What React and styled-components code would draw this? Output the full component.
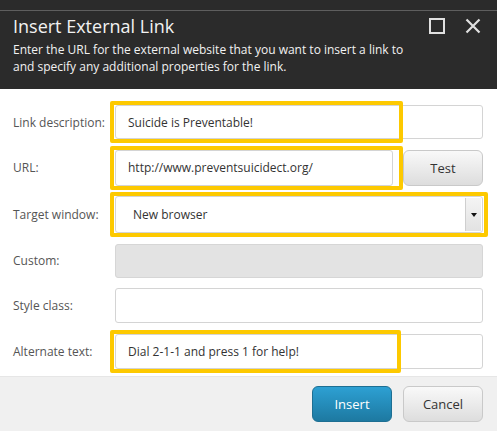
import React from 'react';
import styled, {createGlobalStyle} from 'styled-components';

const Global = createGlobalStyle`
    html, body {
        margin: 0;
        padding: 0;
        background: #ffffff;
    }
    body {
        font-family: "Open Sans", "Liberation Sans", sans-serif;
    }
`;

const Dialog = styled.div`
    width: 497px;
    height: 431px;
    display: flex;
    flex-direction: column;
    overflow: hidden;
    background: #ffffff;
`;

const TopStrip = styled.div`
    height: 10px;
    background: #2b2b2b;
    border-bottom: 1px solid #5e5e5e;
`;

const Header = styled.div`
    background: #2b2b2b;
    color: #f2f2f2;
    padding: 4px 16px 14px 13px;
    height: 78px;
    box-sizing: border-box;
`;

const TitleRow = styled.div`
    display: flex;
    align-items: center;
    justify-content: space-between;
`;

const Title = styled.div`
    font-size: 18px;
    line-height: 22px;
`;

const Icons = styled.div`
    display: flex;
    align-items: center;
    gap: 20px;
    margin-top: -1px;
`;

const Description = styled.div`
    margin-top: 4px;
    font-size: 12px;
    line-height: 17px;
    width: 400px;
`;

const Body = styled.div`
    display: grid;
    grid-template-columns: 102px 1fr;
    row-gap: 10.6px;
    padding: 16px 14px 7px 13px;
`;

const Label = styled.div`
    font-size: 12px;
    color: #555555;
    display: flex;
    align-items: center;
    height: ${p => p.$h || 35}px;
`;

const Field = styled.div`
    position: relative;
    display: flex;
    gap: 10px;
    height: ${p => p.$h || 35}px;
`;

const Input = styled.div`
    flex: 1;
    box-sizing: border-box;
    height: 100%;
    border: 1px solid ${p => (p.$disabled ? '#d6d6d6' : '#d4d4d4')};
    border-radius: 3px;
    background: ${p => (p.$disabled ? '#e3e3e3' : '#ffffff')};
    font-size: 12px;
    color: #333333;
    display: flex;
    align-items: center;
    padding-left: 12px;
`;

const Select = styled(Input)`
    padding-left: 17px;
    justify-content: space-between;
    padding-right: 0;
`;

const Arrow = styled.div`
    width: 15px;
    align-self: stretch;
    margin: 1px 1px 1px 0;
    background: linear-gradient(#f4f4f4, #e2e2e2);
    border-left: 1px solid #cfcfcf;
    display: flex;
    align-items: center;
    justify-content: center;
    &::after {
        content: '';
        border-left: 3px solid transparent;
        border-right: 3px solid transparent;
        border-top: 4px solid #111;
    }
`;

const Button = styled.button`
    width: 80px;
    height: 36px;
    box-sizing: border-box;
    border-radius: 6px;
    font-family: inherit;
    font-size: 13px;
    padding: 0;
    border: 1px solid ${p => (p.$primary ? '#1d6f93' : '#c9c9c9')};
    color: ${p => (p.$primary ? '#ffffff' : '#333333')};
    background: ${p => (p.$primary
        ? 'linear-gradient(#2da0d3, #1d79a1)'
        : 'linear-gradient(#f9f9f9, #dddddd)')};
`;

const Highlight = styled.div`
    position: absolute;
    left: -5px;
    top: -4px;
    bottom: -4px;
    width: ${p => p.$w}px;
    box-sizing: border-box;
    border: 4px solid #fdc900;
    border-radius: 2px;
    pointer-events: none;
`;

const Footer = styled.div`
    flex: 1;
    background: #f0f0f0;
    border-top: 1px solid #e6e6e6;
    display: flex;
    justify-content: flex-end;
    align-items: flex-start;
    gap: 11px;
    padding: 9px 14px 0 0;
`;

const SquareIcon = () => (
    <svg width="16" height="16" viewBox="0 0 16 16">
        <rect x="1" y="1" width="14" height="14" fill="none" stroke="#e0e0e0" strokeWidth="2" />
    </svg>
);

const CloseIcon = () => (
    <svg width="16" height="16" viewBox="0 0 16 16">
        <path d="M1.5 1.5 L14.5 14.5 M14.5 1.5 L1.5 14.5" stroke="#e0e0e0" strokeWidth="2.2" />
    </svg>
);

export default function App() {
    return (
        <>
            <Global />
            <Dialog>
                <TopStrip />
                <Header>
                    <TitleRow>
                        <Title>Insert External Link</Title>
                        <Icons>
                            <SquareIcon />
                            <CloseIcon />
                        </Icons>
                    </TitleRow>
                    <Description>
                        Enter the URL for the external website that you want to insert a link to and specify any additional properties for the link.
                    </Description>
                </Header>
                <Body>
                    <Label $h={34}>Link description:</Label>
                    <Field $h={34}>
                        <Input>Suicide is Preventable!</Input>
                        <Highlight $w={293} />
                    </Field>

                    <Label $h={36}>URL:</Label>
                    <Field $h={36}>
                        <Input>http://www.preventsuicidect.org/</Input>
                        <Button>Test</Button>
                        <Highlight $w={293} />
                    </Field>

                    <Label $h={37}>Target window:</Label>
                    <Field $h={37}>
                        <Select>
                            New browser
                            <Arrow />
                        </Select>
                        <Highlight $w={378} />
                    </Field>

                    <Label $h={34}>Custom:</Label>
                    <Field $h={34}>
                        <Input $disabled />
                    </Field>

                    <Label>Style class:</Label>
                    <Field>
                        <Input />
                    </Field>

                    <Label>Alternate text:</Label>
                    <Field>
                        <Input>Dial 2-1-1 and press 1 for help!</Input>
                        <Highlight $w={291} />
                    </Field>
                </Body>
                <Footer>
                    <Button $primary>Insert</Button>
                    <Button>Cancel</Button>
                </Footer>
            </Dialog>
        </>
    );
}
